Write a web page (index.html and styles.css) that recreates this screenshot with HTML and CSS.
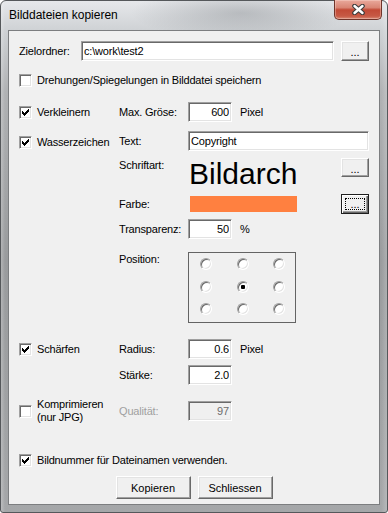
FILE: index.html
```html
<!DOCTYPE html>
<html lang="de">
<head>
  <meta charset="UTF-8">
  <title>Bilddateien kopieren</title>
  <link rel="stylesheet" href="styles.css">
</head>
<body>
<div class="window">
  <div class="titlebar">
    <span class="title">Bilddateien kopieren</span>
    <button class="close" title="Schliessen">
      <svg width="13" height="11" viewBox="0 0 13 11">
        <path d="M2.5 2 L10.5 9 M10.5 2 L2.5 9" stroke="#3c3c3c" stroke-width="4.6" stroke-linecap="round"/>
        <path d="M2.5 2 L10.5 9 M10.5 2 L2.5 9" stroke="#fff" stroke-width="2.4" stroke-linecap="round"/>
      </svg>
    </button>
  </div>

  <div class="client">
    <!-- target folder -->
    <div class="folder">
      <span class="label">Zielordner:</span>
      <input class="field folder-path" value="c:\work\test2">
      <button class="btn dots">...</button>
    </div>

    <div class="row sp9">
      <span class="check"><span class="box"></span>Drehungen/Spiegelungen in Bilddatei speichern</span>
    </div>

    <div class="row sp12">
      <span class="check"><span class="box on"></span>Verkleinern</span>
      <span class="label">Max. Gröse:</span>
      <span class="value"><input class="field num" value="600"><span class="unit">Pixel</span></span>
    </div>

    <!-- watermark -->
    <div class="row sp9">
      <span class="check low"><span class="box on"></span>Wasserzeichen</span>
      <span class="label">Text:</span>
      <input class="field text" value="Copyright">
    </div>
    <div class="row font-row sp7">
      <span></span>
      <span class="label top">Schriftart:</span>
      <span class="value spread">
        <span class="sample">Bildarch</span>
        <button class="btn dots small">...</button>
      </span>
    </div>
    <div class="row sp4">
      <span></span>
      <span class="label">Farbe:</span>
      <span class="value spread">
        <span class="swatch"></span>
        <button class="btn dots focus"><span class="focus-ring">...</span></button>
      </span>
    </div>
    <div class="row sp5">
      <span></span>
      <span class="label">Transparenz:</span>
      <span class="value"><input class="field num" value="50"><span class="unit">%</span></span>
    </div>
    <div class="row pos-row sp13">
      <span></span>
      <span class="label top">Position:</span>
      <div class="position">
        <span class="radio"></span><span class="radio"></span><span class="radio"></span>
        <span class="radio"></span><span class="radio on"></span><span class="radio"></span>
        <span class="radio"></span><span class="radio"></span><span class="radio"></span>
      </div>
    </div>

    <!-- sharpen -->
    <div class="row sp16">
      <span class="check"><span class="box on"></span>Schärfen</span>
      <span class="label">Radius:</span>
      <span class="value"><input class="field num" value="0.6"><span class="unit">Pixel</span></span>
    </div>
    <div class="row sp6">
      <span></span>
      <span class="label">Stärke:</span>
      <input class="field num" value="2.0">
    </div>

    <!-- compress -->
    <div class="row sp13">
      <span class="check"><span class="box"></span><span class="two-line">Komprimieren<br>(nur JPG)</span></span>
      <span class="label off">Qualität:</span>
      <input class="field num" value="97" disabled>
    </div>

    <div class="row sp26">
      <span class="check"><span class="box on"></span>Bildnummer für Dateinamen verwenden.</span>
    </div>

    <div class="actions">
      <button class="btn action">Kopieren</button>
      <button class="btn action">Schliessen</button>
    </div>
  </div>
</div>
</body>
</html>
```

FILE: styles.css
```css
* {
    box-sizing: border-box;
}

body {
    margin: 0;
    background: #fff;
    font-family: "Liberation Sans", Arial, sans-serif;
    font-size: 11px;
    letter-spacing: -0.18px;
    color: #000;
}

/* window frame */
.window {
    width: 388px;
    height: 513px;
    display: flex;
    flex-direction: column;
    padding: 0 7px 7px;
    border: 1px solid #55585b;
    border-radius: 6px 6px 3px 3px;
    background:
        radial-gradient(ellipse 110px 26px at 240px 12px, rgba(90, 95, 100, 0.28), transparent),
        linear-gradient(90deg, rgba(255, 255, 255, 0.25), transparent 4px, transparent 380px, rgba(255, 255, 255, 0.2)),
        linear-gradient(#e6e8eb, #cfd2d5 29px, #b0b2b4 90px, #999b9d 260px, #a5a7a9);
}

.titlebar {
    height: 29px;
    display: flex;
    align-items: flex-start;
}

.title {
    padding: 7px 0 0 1px;
    font-size: 12px;
    line-height: 14px;
    letter-spacing: 0;
}

.close {
    margin: -1px -2px 0 auto;
    width: 48px;
    height: 20px;
    padding: 0;
    display: flex;
    align-items: center;
    justify-content: center;
    border: 1px solid #70342a;
    border-top: 0;
    border-radius: 0 0 5px 5px;
    background: linear-gradient(#e9a99c, #d98574 40%, #c24a36 52%, #c75a45 85%, #d98a76);
    box-shadow: inset 0 0 0 1px rgba(255, 230, 220, 0.35);
}

/* client area */
.client {
    flex: 1;
    background: #f0f0f0;
    border: 1px solid #7c7e80;
    padding: 10px 10px 0;
}

.folder {
    display: flex;
    align-items: center;
    height: 20px;
}

.folder .label {
    width: 62px;
}

.folder-path {
    width: 253px;
}

.folder .dots {
    margin-left: 7px;
    width: 30px;
    height: 20px;
}

.row {
    display: grid;
    grid-template-columns: 100px 69px 181px;
    align-items: center;
    min-height: 20px;
}

.sp4 { margin-top: 4px; }
.sp5 { margin-top: 5px; }
.sp6 { margin-top: 6px; }
.sp7 { margin-top: 7px; }
.sp9 { margin-top: 9px; }
.sp12 { margin-top: 12px; }
.sp13 { margin-top: 13px; }
.sp16 { margin-top: 16px; }
.sp26 { margin-top: 26px; }

.label {
    line-height: 13px;
    white-space: nowrap;
}

.label.top {
    align-self: start;
    padding-top: 1px;
}

.label.off {
    color: #a0a0a0;
}

.check {
    display: flex;
    align-items: center;
    white-space: nowrap;
    line-height: 13px;
}

.check.low {
    padding-top: 2px;
}

.two-line {
    line-height: 13px;
}

/* classic sunken checkbox */
.box {
    width: 13px;
    height: 13px;
    margin-right: 5px;
    flex-shrink: 0;
    background: #fff;
    border: 1px solid;
    border-color: #a0a0a0 #fff #fff #a0a0a0;
    box-shadow: inset 1px 1px 0 #696969, inset -1px -1px 0 #e3e3e3;
}

.box.on {
    background:
        url("data:image/svg+xml,%3Csvg xmlns='http://www.w3.org/2000/svg' width='7' height='7'%3E%3Cpath d='M0 2h1v3H0zM1 3h1v3H1zM2 4h1v3H2zM3 3h1v3H3zM4 2h1v3H4zM5 1h1v3H5zM6 0h1v3H6z'/%3E%3C/svg%3E") 2px 2px no-repeat,
        #fff;
}

/* classic sunken edit */
.field {
    height: 20px;
    margin: 0;
    padding: 0 2px;
    font: inherit;
    font-size: 11px;
    letter-spacing: -0.18px;
    color: #000;
    background: #fff;
    border: 1px solid;
    border-color: #a0a0a0 #fff #fff #a0a0a0;
    box-shadow: inset 1px 1px 0 #696969, inset -1px -1px 0 #e3e3e3;
    outline: none;
}

.field.num {
    width: 44px;
    text-align: right;
}

.field.text {
    width: 181px;
}

.field:disabled {
    background: #f0f0f0;
    color: #6d6d6d;
}

.value {
    display: flex;
    align-items: center;
}

.value.spread {
    justify-content: space-between;
}

.unit {
    margin-left: 8px;
}

.font-row {
    min-height: 32px;
}

.font-row .value {
    align-items: flex-start;
}

.sample {
    font-size: 30px;
    line-height: 32px;
    letter-spacing: 0;
    padding-left: 1px;
}

.swatch {
    width: 107px;
    height: 16px;
    margin-left: 2px;
    background: #ff8040;
}

/* classic raised button */
.btn {
    margin: 0;
    padding: 0;
    font: inherit;
    font-size: 11px;
    color: #000;
    background: #f0f0f0;
    border: 1px solid;
    border-color: #fff #696969 #696969 #fff;
    box-shadow: inset -1px -1px 0 #a0a0a0, inset 1px 1px 0 #e3e3e3;
}

.btn.dots {
    width: 28px;
    height: 20px;
    line-height: 14px;
    padding-top: 2px;
}

.btn.small {
    height: 19px;
}

.btn.focus {
    border: 1px solid #1e1e1e;
    box-shadow: inset 1px 1px 0 #fff, inset -1px -1px 0 #696969, inset -2px -2px 0 #a0a0a0;
    padding: 3px;
}

.focus-ring {
    display: block;
    height: 12px;
    line-height: 10px;
    border: 1px dotted #000;
}

.position {
    width: 108px;
    height: 71px;
    border: 1px solid #646464;
    display: grid;
    grid-template-columns: repeat(3, 12px);
    grid-auto-rows: 12px;
    column-gap: 24.5px;
    row-gap: 10.5px;
    padding: 5px 0 0 11px;
}

/* classic radio button */
.radio {
    width: 12px;
    height: 12px;
    border-radius: 50%;
    background: #fff;
    border: 1px solid;
    border-color: #a0a0a0 #fff #fff #a0a0a0;
    box-shadow: inset 1px 1px 0 #696969, inset -1px -1px 0 #e3e3e3;
}

.radio.on {
    background: radial-gradient(circle at 50% 50%, #000 2px, #fff 2.5px);
}

.actions {
    margin-top: 6px;
    display: flex;
    justify-content: center;
    gap: 7px;
}

.btn.action {
    width: 75px;
    height: 23px;
}
```
